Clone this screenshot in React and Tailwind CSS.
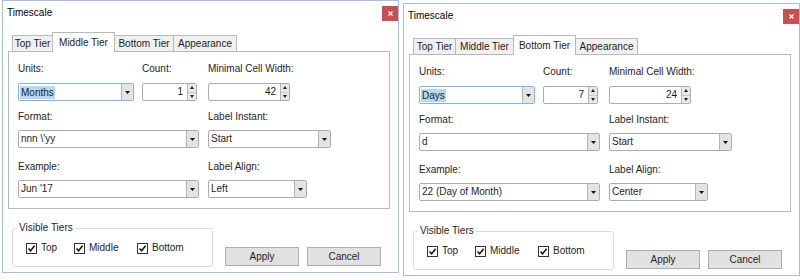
import React from "react";

const FONT = "font-['Segoe_UI','Liberation_Sans',sans-serif] text-[10px] text-[#1e1e1e]";

function Arrow() {
  return (
    <svg width="5" height="3" viewBox="0 0 5 3" className="block">
      <path d="M0 0 L5 0 L2.5 3 Z" fill="#111" />
    </svg>
  );
}

function Combo({ w, value, focused }) {
  return (
    <div
      className={`flex h-[18px] ${w} rounded-[2px] border bg-white ${
        focused ? "border-[#7eb4ea]" : "border-[#acacac]"
      }`}
    >
      <div className="flex flex-1 items-center pl-[1px] leading-[14px]">
        {focused ? (
          <span className="bg-[#b7d8f5] px-[1px] leading-[13px]">{value}</span>
        ) : (
          <span className="px-[1px]">{value}</span>
        )}
      </div>
      <div className="flex w-[12px] items-center justify-center border-l border-[#b5b5b5] bg-[#e3e3e3]">
        <Arrow />
      </div>
    </div>
  );
}

function Spinner({ w, value }) {
  return (
    <div className={`flex h-[18px] ${w} rounded-[2px] border border-[#acacac] bg-white`}>
      <div className="flex flex-1 items-center justify-end pr-[4px] leading-[14px]">{value}</div>
      <div className="flex w-[9px] flex-col border-l border-[#b5b5b5] bg-[#e8e8e8]">
        <div className="flex flex-1 items-center justify-center border-b border-[#c8c8c8]">
          <svg width="4" height="3" viewBox="0 0 4 3" className="block">
            <path d="M0 3 L4 3 L2 0 Z" fill="#222" />
          </svg>
        </div>
        <div className="flex flex-1 items-center justify-center">
          <svg width="4" height="3" viewBox="0 0 4 3" className="block">
            <path d="M0 0 L4 0 L2 3 Z" fill="#222" />
          </svg>
        </div>
      </div>
    </div>
  );
}

function Label({ children }) {
  return <div className="h-[14px] leading-[14px] whitespace-nowrap">{children}</div>;
}

function Check({ label, w }) {
  return (
    <div className={`flex items-center ${w}`}>
      <div className="flex h-[11px] w-[11px] items-center justify-center border border-[#333] bg-white">
        <svg width="9" height="9" viewBox="0 0 9 9" className="block">
          <path d="M1.5 4.5 L3.6 6.8 L7.6 1.8" stroke="#111" strokeWidth="1.5" fill="none" />
        </svg>
      </div>
      <span className="ml-[4px] leading-[14px]">{label}</span>
    </div>
  );
}

function Tab({ label, w, active }) {
  if (active) {
    return (
      <div
        className={`relative z-10 -mb-px -ml-px flex h-[20px] ${w} items-start justify-center border border-b-0 border-[#b9b9b9] bg-white pt-[3px] leading-[14px]`}
      >
        {label}
      </div>
    );
  }
  return (
    <div
      className={`-ml-px flex h-[16px] ${w} items-center justify-center border border-b-0 border-[#b9b9b9] bg-[#f0f0f0] leading-[14px] first:ml-0`}
    >
      {label}
    </div>
  );
}

function Window({ cls, tabs, d }) {
  return (
    <div className={`flex h-[273px] w-[397px] flex-col border border-[#a3bde6] bg-white ${cls}`}>
      <div className="flex h-[31px] items-start justify-between">
        <div className="ml-[4px] mt-[5px] leading-[14px] text-black">Timescale</div>
        <div className="mt-[5px] flex h-[15px] w-[16px] items-center justify-center bg-[#c75050]">
          <svg width="5" height="5" viewBox="0 0 5 5" className="block">
            <path d="M0.5 0.5 L4.5 4.5 M4.5 0.5 L0.5 4.5" stroke="#fff" strokeWidth="1.3" />
          </svg>
        </div>
      </div>
      <div className="ml-[5px] w-[382px]">
        <div className="flex h-[19px] items-end pl-[4px]">
          {tabs.map((t) => (
            <Tab key={t.label} {...t} />
          ))}
        </div>
        <div className="h-[158px] border border-[#b9b9b9] pl-[9px] pt-[10px]">
          <div className="flex">
            <div className="w-[124px]">
              <Label>Units:</Label>
              <div className="mt-[7px]">
                <Combo w="w-[116px]" value={d.units} focused />
              </div>
            </div>
            <div className="w-[66px]">
              <Label>Count:</Label>
              <div className="mt-[7px]">
                <Spinner w="w-[55px]" value={d.count} />
              </div>
            </div>
            <div>
              <Label>Minimal Cell Width:</Label>
              <div className="mt-[7px]">
                <Spinner w="w-[82px]" value={d.min} />
              </div>
            </div>
          </div>
          <div className="mt-[9px] flex">
            <div className="w-[190px]">
              <Label>Format:</Label>
              <div className="mt-[6px]">
                <Combo w="w-[181px]" value={d.format} />
              </div>
            </div>
            <div>
              <Label>Label Instant:</Label>
              <div className="mt-[6px]">
                <Combo w="w-[123px]" value={d.instant} />
              </div>
            </div>
          </div>
          <div className="mt-[12px] flex">
            <div className="w-[190px]">
              <Label>Example:</Label>
              <div className="mt-[6px]">
                <Combo w="w-[181px]" value={d.example} />
              </div>
            </div>
            <div>
              <Label>Label Align:</Label>
              <div className="mt-[6px]">
                <Combo w="w-[99px]" value={d.align} />
              </div>
            </div>
          </div>
        </div>
      </div>
      <div className="ml-[9px] mt-[12px] flex items-end">
        <fieldset className="h-[46px] w-[201px] rounded-[3px] border border-[#dcdcdc]">
          <legend className="ml-[4px] px-[2px] leading-[14px]">Visible Tiers</legend>
          <div className="mt-[6px] flex pl-[13px]">
            <Check label="Top" w="w-[48px]" />
            <Check label="Middle" w="w-[63px]" />
            <Check label="Bottom" w="w-[60px]" />
          </div>
        </fieldset>
        <button className="mb-[1px] ml-[12px] h-[19px] w-[74px] border border-[#adadad] bg-[#e1e1e1] leading-[14px]">
          Apply
        </button>
        <button className="mb-[1px] ml-[8px] h-[19px] w-[74px] border border-[#adadad] bg-[#e1e1e1] leading-[14px]">
          Cancel
        </button>
      </div>
    </div>
  );
}

export default function App() {
  return (
    <div className={`flex h-[280px] w-[800px] items-start bg-white ${FONT}`}>
      <Window
        cls="ml-[2px]"
        tabs={[
          { label: "Top Tier", w: "w-[41px]" },
          { label: "Middle Tier", w: "w-[63px]", active: true },
          { label: "Bottom Tier", w: "w-[60px]" },
          { label: "Appearance", w: "w-[64px]" },
        ]}
        d={{
          units: "Months",
          count: "1",
          min: "42",
          format: "nnn \\'yy",
          instant: "Start",
          example: "Jun '17",
          align: "Left",
        }}
      />
      <Window
        cls="ml-[4px] mt-[3px]"
        tabs={[
          { label: "Top Tier", w: "w-[43px]" },
          { label: "Middle Tier", w: "w-[59px]" },
          { label: "Bottom Tier", w: "w-[63px]", active: true },
          { label: "Appearance", w: "w-[63px]" },
        ]}
        d={{
          units: "Days",
          count: "7",
          min: "24",
          format: "d",
          instant: "Start",
          example: "22 (Day of Month)",
          align: "Center",
        }}
      />
    </div>
  );
}
